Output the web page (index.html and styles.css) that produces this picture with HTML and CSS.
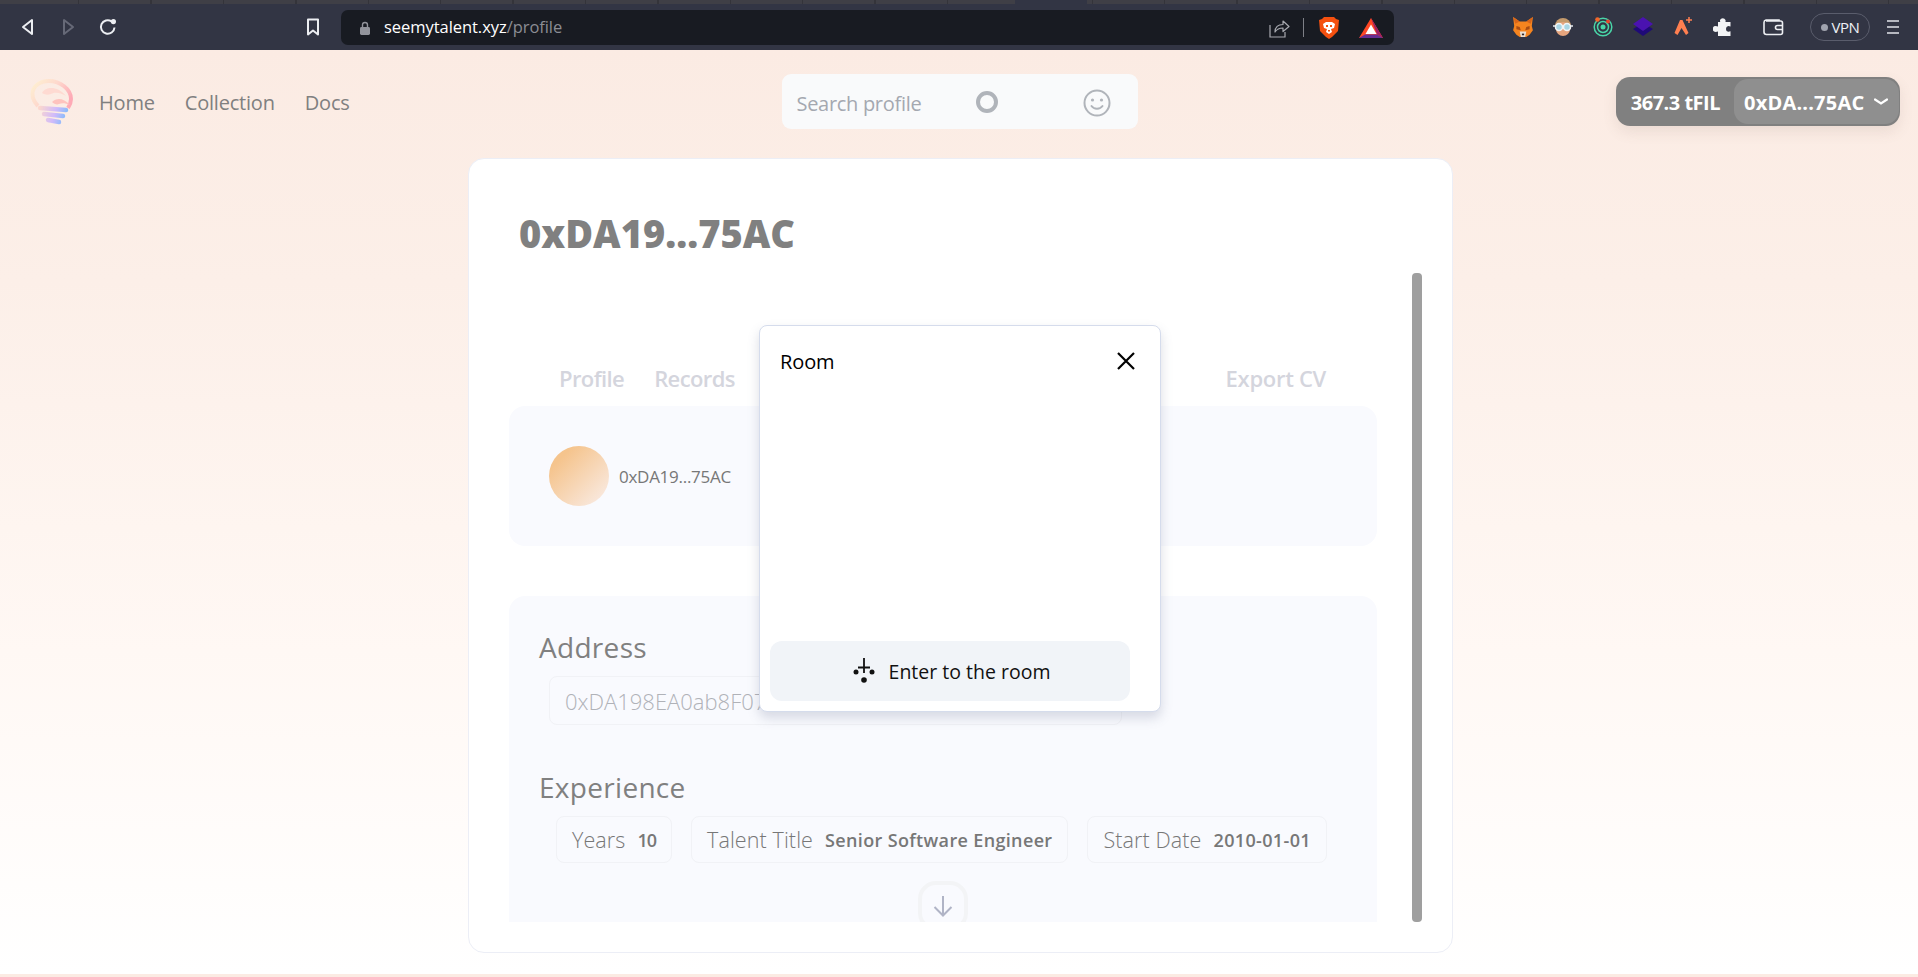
FILE: index.html
```html
<!DOCTYPE html>
<html lang="en">
<head>
    <meta charset="UTF-8">
    <title>seemytalent.xyz/profile</title>
    <link rel="stylesheet" href="styles.css">
</head>
<body>
    <!-- Browser chrome -->
    <div class="tab-strip"><div class="tab-active"></div></div>
    <div class="toolbar">
        <button class="tool"><svg width="16" height="20" viewBox="0 0 16 20"><path d="M12 3v14L3 10z" fill="none" stroke="#eceef2" stroke-width="2" stroke-linejoin="round"/></svg></button>
        <button class="tool"><svg width="16" height="20" viewBox="0 0 16 20"><path d="M4 3v14l9-7z" fill="none" stroke="#666977" stroke-width="2" stroke-linejoin="round"/></svg></button>
        <button class="tool"><svg width="20" height="20" viewBox="0 0 20 20"><path d="M16.5 10.5a6.8 6.8 0 1 1-3-6.2" fill="none" stroke="#eceef2" stroke-width="2"/><circle cx="15.4" cy="4.6" r="2.6" fill="#eceef2"/></svg></button>
        <button class="tool tool-bookmark"><svg width="14" height="18" viewBox="0 0 14 18"><path d="M2 1.500h10v15l-5-4-5 4z" fill="none" stroke="#eceef2" stroke-width="2" stroke-linejoin="round"/></svg></button>

        <div class="address-bar">
            <svg class="lock" width="12" height="14" viewBox="0 0 12 14"><path d="M3.500 6V4a2.500 2.500 0 0 1 5 0v2" fill="none" stroke="#92949c" stroke-width="1.400"/><rect x="1" y="6" width="10" height="8" rx="1.400" fill="#92949c"/></svg>
            <span class="url">seemytalent.xyz<span class="url-path">/profile</span></span>
            <div class="address-icons">
                <svg width="22" height="20" viewBox="0 0 22 20"><path d="M2 7v12h15v-5" fill="none" stroke="#a8aab0" stroke-width="1.200"/><path d="M7 14c0-5 3-7.500 8-7.500V3l6 5.500-6 5V10c-3 0-6 1-8 4z" fill="none" stroke="#a8aab0" stroke-width="1.200" stroke-linejoin="round"/></svg>
                <span class="address-divider"></span>
                <svg class="brave" width="20" height="22" viewBox="0 0 20 22"><path d="M5 0h10l2 2 3 1-1 11-6 6-3 2-3-2-6-6L0 3l3-1z" fill="#f4500f"/><path d="M4 7l3-2h6l3 2-1 4-3 1 1 3-3 2-3-2 1-3-3-1z" fill="#fff"/><path d="M7 8h2v2H7zM11 8h2v2h-2zM9 13h2v1.500H9z" fill="#f4500f"/></svg>
                <svg class="bat" width="24" height="20" viewBox="0 0 24 20"><path d="M12 0l12 20H0z" fill="#ff4724"/><path d="M12 0l12 20-6-3.500z" fill="#9e1f63"/><path d="M0 20l6-3.500h12l6 3.500z" fill="#662d91"/><path d="M12 6.500l5.500 9.500h-11z" fill="#fff"/></svg>
            </div>
        </div>

        <div class="extensions">
            <button class="tool"><svg width="22" height="22" viewBox="0 0 20 20"><path d="M1 1l6 4h6l6-4-1 8 1 4-3 4-3 2H7l-3-2-3-4 1-4z" fill="#f5841f"/><path d="M1 1l6 4-4 2zM19 1l-6 4 4 2z" fill="#d9661a"/><path d="M4 9l3 1 1 3-4-1zM16 9l-3 1-1 3 4-1z" fill="#a84c14"/><path d="M7 14h6l-1 5H8z" fill="#eadfd3"/><path d="M9 16h2v1.500H9z" fill="#33282a"/></svg></button>
            <button class="tool"><svg width="20" height="20" viewBox="0 0 20 20"><circle cx="10" cy="9" r="8" fill="#c49a6c"/><circle cx="10" cy="12" r="7" fill="#e6a57e"/><path d="M0 9h20" stroke="#e8ecef" stroke-width="1.500"/><circle cx="6" cy="10" r="3.500" fill="#a9d6e5" stroke="#f2f4f6" stroke-width="1.500"/><circle cx="14" cy="10" r="3.500" fill="#a9d6e5" stroke="#f2f4f6" stroke-width="1.500"/></svg></button>
            <button class="tool"><svg width="20" height="20" viewBox="0 0 20 20"><circle cx="10" cy="10" r="8.800" fill="none" stroke="#49d6a8" stroke-width="1.500"/><circle cx="10" cy="10" r="5.500" fill="none" stroke="#49d6a8" stroke-width="1.500"/><circle cx="10" cy="10" r="2.500" fill="#49d6a8"/><circle cx="4.500" cy="2.500" r="2.300" fill="#f4662a"/><circle cx="15" cy="4.500" r="2" fill="#e8432a"/></svg></button>
            <button class="tool"><svg width="20" height="20" viewBox="0 0 20 20"><path d="M10 6l10 6-10 7-10-7z" fill="#1f0a78"/><path d="M10 0l10 7-10 7L0 7z" fill="#4a12b0"/></svg></button>
            <button class="tool"><svg width="20" height="20" viewBox="0 0 20 20"><path d="M7 3h2.500l6 13-2.500 2-4.500-7-4 7-3-2z" fill="#ff7f50"/><path d="M16 0v6M13 3h6" stroke="#ff7f50" stroke-width="1.500"/></svg></button>
            <button class="tool"><svg width="20" height="20" viewBox="0 0 20 20"><path d="M7 3a3 3 0 0 1 5.500 0c.2.500 0 1.500 0 2h5v4.500c-.800 0-1.500-.5-2.300-.5a3 3 0 0 0 0 5.800c.8 0 1.500-.3 2.300-.5V19H5v-4.500c-.8.300-1.500.5-2.300.5a3 3 0 0 1 0-6c.8 0 1.500.3 2.300.5V5h2.200c0-.5-.3-1.500-.200-2z" fill="#f3f4f6"/></svg></button>
            <button class="tool tool-wallet"><svg width="22" height="18" viewBox="0 0 22 18"><path d="M17 3V2H4a2.500 2.500 0 0 0-2 2.500V14a2.500 2.500 0 0 0 2.500 2.500h14a2 2 0 0 0 2-2V5a2 2 0 0 0-2-2H4" fill="none" stroke="#eceef2" stroke-width="1.600"/><path d="M20 7.500h-4.500a2 2 0 0 0 0 4H20" fill="none" stroke="#eceef2" stroke-width="1.600"/></svg></button>
        </div>
        <div class="vpn"><span class="vpn-dot"></span>VPN</div>
        <button class="tool tool-menu"><svg width="14" height="16" viewBox="0 0 14 16"><path d="M1 2h12M1 8h12M1 14h12" stroke="#e2e4e9" stroke-width="1.600"/></svg></button>
    </div>

    <div class="page">
        <!-- Site nav -->
        <nav class="site-nav">
            <div class="nav-left">
                <svg class="logo" width="44" height="46" viewBox="0 0 44 46">
                    <defs>
                        <linearGradient id="bulb" x1="0" y1="0" x2="1" y2="0.600">
                            <stop offset="0" stop-color="#fff3cf"/>
                            <stop offset="0.5" stop-color="#ffd6ca"/>
                            <stop offset="1" stop-color="#ff9fae"/>
                        </linearGradient>
                        <linearGradient id="base" gradientUnits="userSpaceOnUse" x1="8" y1="30" x2="38" y2="40">
                            <stop offset="0" stop-color="#ffd6c8"/>
                            <stop offset="0.550" stop-color="#c9b2ff"/>
                            <stop offset="1" stop-color="#5fb4ff"/>
                        </linearGradient>
                    </defs>
                    <path d="M8 27C4 23 2.500 19 2.500 15 2.500 7 10 2 19 2c11 0 22 8 22 18 0 3-1 6-3 9" fill="none" stroke="url(#bulb)" stroke-width="4"/>
                    <path d="M12 14c3-6 15-8 24 3-7-4-11-4-15-2-3 1-6 1-9-1z" fill="#ffd8cf"/>
                    <path d="M22 23c4-4 11-5 18 3-5-2-8-2-11-1-2 1-5 0-7-2z" fill="#ffbcb8"/>
                    <path d="M10 29l26 2M14 35l19 2M18 41l11 2" stroke="url(#base)" stroke-width="4.500" stroke-linecap="round" fill="none"/>
                </svg>
                <a class="nav-link">Home</a>
                <a class="nav-link">Collection</a>
                <a class="nav-link">Docs</a>
            </div>
            <div class="search">
                <input class="search-input" placeholder="Search profile">
                <span class="search-ring"></span>
                <svg class="search-smile" width="28" height="28" viewBox="0 0 28 28"><circle cx="14" cy="14" r="12.500" fill="none" stroke="#b0b4ba" stroke-width="2"/><circle cx="9.500" cy="11" r="1.600" fill="#b0b4ba"/><circle cx="18.500" cy="11" r="1.600" fill="#b0b4ba"/><path d="M8.500 17c2.500 3.600 8.500 3.600 11 0" fill="none" stroke="#b0b4ba" stroke-width="2" stroke-linecap="round"/></svg>
            </div>
            <div class="nav-right">
                <div class="wallet">
                    <span class="wallet-balance">367.3 tFIL</span>
                    <div class="wallet-account">
                        0xDA...75AC
                        <svg width="14" height="8" viewBox="0 0 14 8"><path d="M1 1.500l6 4 6-4" fill="none" stroke="#fff" stroke-width="2.200" stroke-linecap="round"/></svg>
                    </div>
                </div>
            </div>
        </nav>

        <!-- Profile card -->
        <main class="card">
            <h1 class="card-title">0xDA19...75AC</h1>
            <div class="card-body">
                <div class="scroller">
                    <div class="tabs">
                        <a class="tab">Profile</a>
                        <a class="tab">Records</a>
                        <a class="tab tab-export">Export CV</a>
                    </div>

                    <section class="panel panel-user">
                        <div class="avatar"></div>
                        <span class="user-address">0xDA19...75AC</span>
                    </section>

                    <section class="panel panel-details">
                        <h2 class="section-title">Address</h2>
                        <div class="address-field">0xDA198EA0ab8F07a1c3</div>

                        <h2 class="section-title section-title-exp">Experience</h2>
                        <div class="facts">
                            <div class="fact"><span class="fact-label">Years</span><span class="fact-value fact-value-short">10</span></div>
                            <div class="fact"><span class="fact-label">Talent Title</span><span class="fact-value">Senior Software Engineer</span></div>
                            <div class="fact"><span class="fact-label">Start Date</span><span class="fact-value">2010-01-01</span></div>
                        </div>
                        <button class="more"><svg width="22" height="24" viewBox="0 0 22 24"><path d="M11 2v19M2.500 13l8.500 8.500 8.500-8.500" fill="none" stroke="#b0b4c6" stroke-width="2"/></svg></button>
                    </section>
                </div>
                <div class="scrollbar"></div>
            </div>

            <!-- Room dialog -->
            <div class="modal">
                <div class="modal-header">
                    <span class="modal-title">Room</span>
                    <svg class="modal-close" width="20" height="20" viewBox="0 0 20 20"><path d="M2 2l16 16M18 2L2 18" stroke="#000" stroke-width="2.200"/></svg>
                </div>
                <button class="enter-button">
                    <svg width="24" height="28" viewBox="0 0 24 28"><path d="M12 1v15M6 10.500h12" stroke="#111" stroke-width="1.800"/><circle cx="4" cy="15" r="2.500" fill="#111"/><circle cx="20" cy="15" r="2.500" fill="#111"/><circle cx="12" cy="23" r="2.800" fill="#111"/></svg>
                    Enter to the room
                </button>
            </div>
        </main>
    </div>
</body>
</html>
```
FILE: styles.css
```css
* {
    box-sizing: border-box;
}

body {
    margin: 0;
    height: 977px;
    overflow: hidden;
    background: #fbebe3;
    font-family: "Open Sans", "Noto Sans", sans-serif;
    color: #808080;
}

button {
    border: none;
    background: none;
    padding: 0;
    font-family: inherit;
}

/* Browser chrome */
.tab-strip {
    height: 4px;
    background: repeating-linear-gradient(90deg, #3f3f46 0, #3f3f46 71px, #34343a 71px, #34343a 72.4px);
    background-position: 7px 0;
    padding-left: 1015px;
}

.tab-active {
    width: 72px;
    height: 4px;
    background: #323544;
}

.toolbar {
    height: 46px;
    background: #323544;
    display: flex;
    align-items: center;
    padding-left: 8px;
}

.tool {
    width: 40px;
    height: 40px;
    display: flex;
    align-items: center;
    justify-content: center;
    flex: none;
}

.tool-bookmark {
    margin-left: 165px;
}

.address-bar {
    width: 1053px;
    height: 35px;
    margin-left: 8px;
    margin-top: 1px;
    padding-left: 18px;
    background: #181b22;
    border-radius: 7px;
    display: flex;
    align-items: center;
    flex: none;
}

.lock {
    flex: none;
}

.url {
    margin-left: 13px;
    margin-top: -2px;
    font-size: 16.5px;
    letter-spacing: -0.05px;
    color: #fff;
}

.url-path {
    color: #8b8d94;
}

.address-icons {
    margin-left: auto;
    display: flex;
    align-items: center;
}

.address-divider {
    width: 1px;
    height: 19px;
    margin-left: 13px;
    background: #7e8087;
}

.brave {
    margin-left: 15px;
}

.bat {
    margin-left: 20px;
    margin-right: 11px;
}

.extensions {
    display: flex;
    margin-left: 109px;
}

.tool-wallet {
    margin-left: 10px;
}

.vpn {
    width: 60px;
    height: 28px;
    margin-left: 17px;
    border: 1px solid #5a5d6c;
    border-radius: 14px;
    display: flex;
    align-items: center;
    justify-content: center;
    gap: 4px;
    font-size: 15px;
    letter-spacing: -0.5px;
    color: #eef1f6;
}

.vpn-dot {
    width: 7px;
    height: 7px;
    border-radius: 50%;
    background: #a0a3ae;
}

.tool-menu {
    width: 36px;
    margin-left: 5px;
}

/* Page */
.page {
    height: 924px;
    background: linear-gradient(#fbebe3 0%, #fcefe8 25%, #fff8f4 65%, #fff 100%);
}

.site-nav {
    display: grid;
    grid-template-columns: 1fr auto 1fr;
    align-items: center;
    padding: 24px 18px 0 19px;
    margin-bottom: 29px;
}

.nav-left {
    display: flex;
    align-items: center;
}

.logo {
    margin-left: 11px;
    opacity: 0.85;
    filter: blur(0.6px);
    flex: none;
}

.nav-link {
    margin-left: 30px;
    margin-top: 1px;
    font-size: 20px;
    font-weight: 500;
    letter-spacing: -0.2px;
    color: #808080;
}

.logo + .nav-link {
    margin-left: 25px;
}

.search {
    width: 356px;
    height: 55px;
    padding-left: 15px;
    background: #f9fafb;
    border-radius: 9px;
    display: flex;
    align-items: center;
}

.search-input {
    width: 179px;
    border: none;
    outline: none;
    padding: 0;
    margin-top: 4px;
    background: none;
    font-family: inherit;
    font-size: 20px;
    letter-spacing: -0.3px;
}

.search-input::placeholder {
    color: #a4a8b0;
    opacity: 1;
}

.search-ring {
    width: 22px;
    height: 22px;
    border: 4px solid #b0b4ba;
    border-radius: 50%;
    flex: none;
}

.search-smile {
    margin-left: 85px;
    margin-top: 2px;
}

.nav-right {
    display: flex;
    justify-content: flex-end;
}

.wallet {
    height: 49px;
    padding: 2px 1px 2px 15px;
    background: #808080;
    border-radius: 14px;
    box-shadow: 0 6px 14px rgba(120, 100, 90, 0.12);
    display: flex;
    align-items: center;
    gap: 14px;
    font-size: 20px;
    font-weight: 700;
    letter-spacing: -0.5px;
    color: #fff;
}

.wallet-balance {
    margin-top: 1px;
}

.wallet-account {
    height: 45px;
    width: 165px;
    padding: 1px 0 0 10px;
    background: #8f8f8f;
    border-radius: 14px;
    display: flex;
    align-items: center;
    gap: 10px;
    letter-spacing: 0.2px;
}

/* Card */
.card {
    position: relative;
    width: 985px;
    height: 795px;
    margin-left: 468px;
    padding: 54px 29px 29px 40px;
    background: #fff;
    border: 1px solid #eceef6;
    border-radius: 16px;
}

.card-title {
    margin: 0 0 20px 10px;
    font-size: 38px;
    line-height: 40px;
    font-weight: 800;
    color: #808080;
}

.card-body {
    height: 649px;
    display: flex;
    gap: 35px;
}

.scroller {
    width: 868px;
    overflow: hidden;
    padding-top: 91px;
}

.scrollbar {
    width: 10px;
    background: #9f9f9f;
    border-radius: 4px;
}

.tabs {
    display: flex;
    gap: 30px;
    padding: 0 51px 0 50px;
    margin-bottom: 14px;
}

.tab {
    font-size: 22px;
    line-height: 28px;
    font-weight: 600;
    letter-spacing: -0.6px;
    color: #d4d5dd;
}

.tab-export {
    margin-left: auto;
    letter-spacing: -0.3px;
}

.panel {
    background: #f9fafe;
    border-radius: 16px;
}

.panel-user {
    height: 140px;
    padding-left: 40px;
    display: flex;
    align-items: center;
    gap: 10px;
}

.avatar {
    width: 60px;
    height: 60px;
    border-radius: 50%;
    background: linear-gradient(135deg, #f5c48d 20%, #f9e9df 90%);
}

.user-address {
    margin-top: 1px;
    font-size: 17px;
    letter-spacing: -0.27px;
    color: #777;
}

.panel-details {
    margin-top: 50px;
    padding: 33px 0 40px 30px;
}

.section-title {
    margin: 0 0 11px;
    font-size: 28px;
    line-height: 36px;
    font-weight: 500;
    letter-spacing: 0.3px;
    color: #808080;
}

.section-title-exp {
    margin-top: 44px;
}

.address-field {
    width: 573px;
    height: 49px;
    margin-left: 10px;
    padding-left: 15px;
    border: 1px solid #f1f2f6;
    border-radius: 8px;
    display: flex;
    align-items: center;
    font-size: 22px;
    font-weight: 300;
    color: #b0b2b8;
}

.facts {
    display: flex;
    gap: 19px;
    margin-left: 17px;
}

.fact {
    height: 47px;
    padding: 0 15px;
    border: 1px solid #f1f2f6;
    border-radius: 8px;
    display: flex;
    align-items: center;
    gap: 12px;
}

.fact-label {
    font-size: 21.5px;
    letter-spacing: 0.1px;
    font-weight: 300;
    color: #777;
}

.fact-value {
    font-size: 18px;
    font-weight: 600;
    letter-spacing: 0.35px;
    color: #777;
}

.fact-value-short {
    letter-spacing: -1px;
}

.more {
    display: flex;
    align-items: center;
    justify-content: center;
    width: 50px;
    height: 50px;
    margin: 18px 0 0 379px;
    border: 4px solid #f3f4f6;
    border-radius: 18px;
}

/* Room dialog */
.modal {
    position: absolute;
    left: 290px;
    top: 166px;
    width: 402px;
    height: 387px;
    padding: 0 30px 10px 10px;
    background: #fff;
    border: 1px solid #d5dcec;
    border-radius: 8px;
    box-shadow: 0 6px 12px rgba(90, 100, 130, 0.22);
    display: flex;
    flex-direction: column;
    justify-content: space-between;
}

.modal-header {
    display: flex;
    align-items: center;
    justify-content: space-between;
    padding: 22px 0 0 10px;
    margin-right: -6px;
}

.modal-close {
    margin-top: -1px;
}

.modal-title {
    font-size: 20px;
    letter-spacing: -0.1px;
    color: #000;
}

.enter-button {
    width: 360px;
    height: 60px;
    padding-left: 2px;
    background: #f1f4f8;
    border-radius: 12px;
    display: flex;
    align-items: center;
    justify-content: center;
    gap: 13px;
    font-size: 19.5px;
    font-weight: 500;
    color: #111;
}
```
